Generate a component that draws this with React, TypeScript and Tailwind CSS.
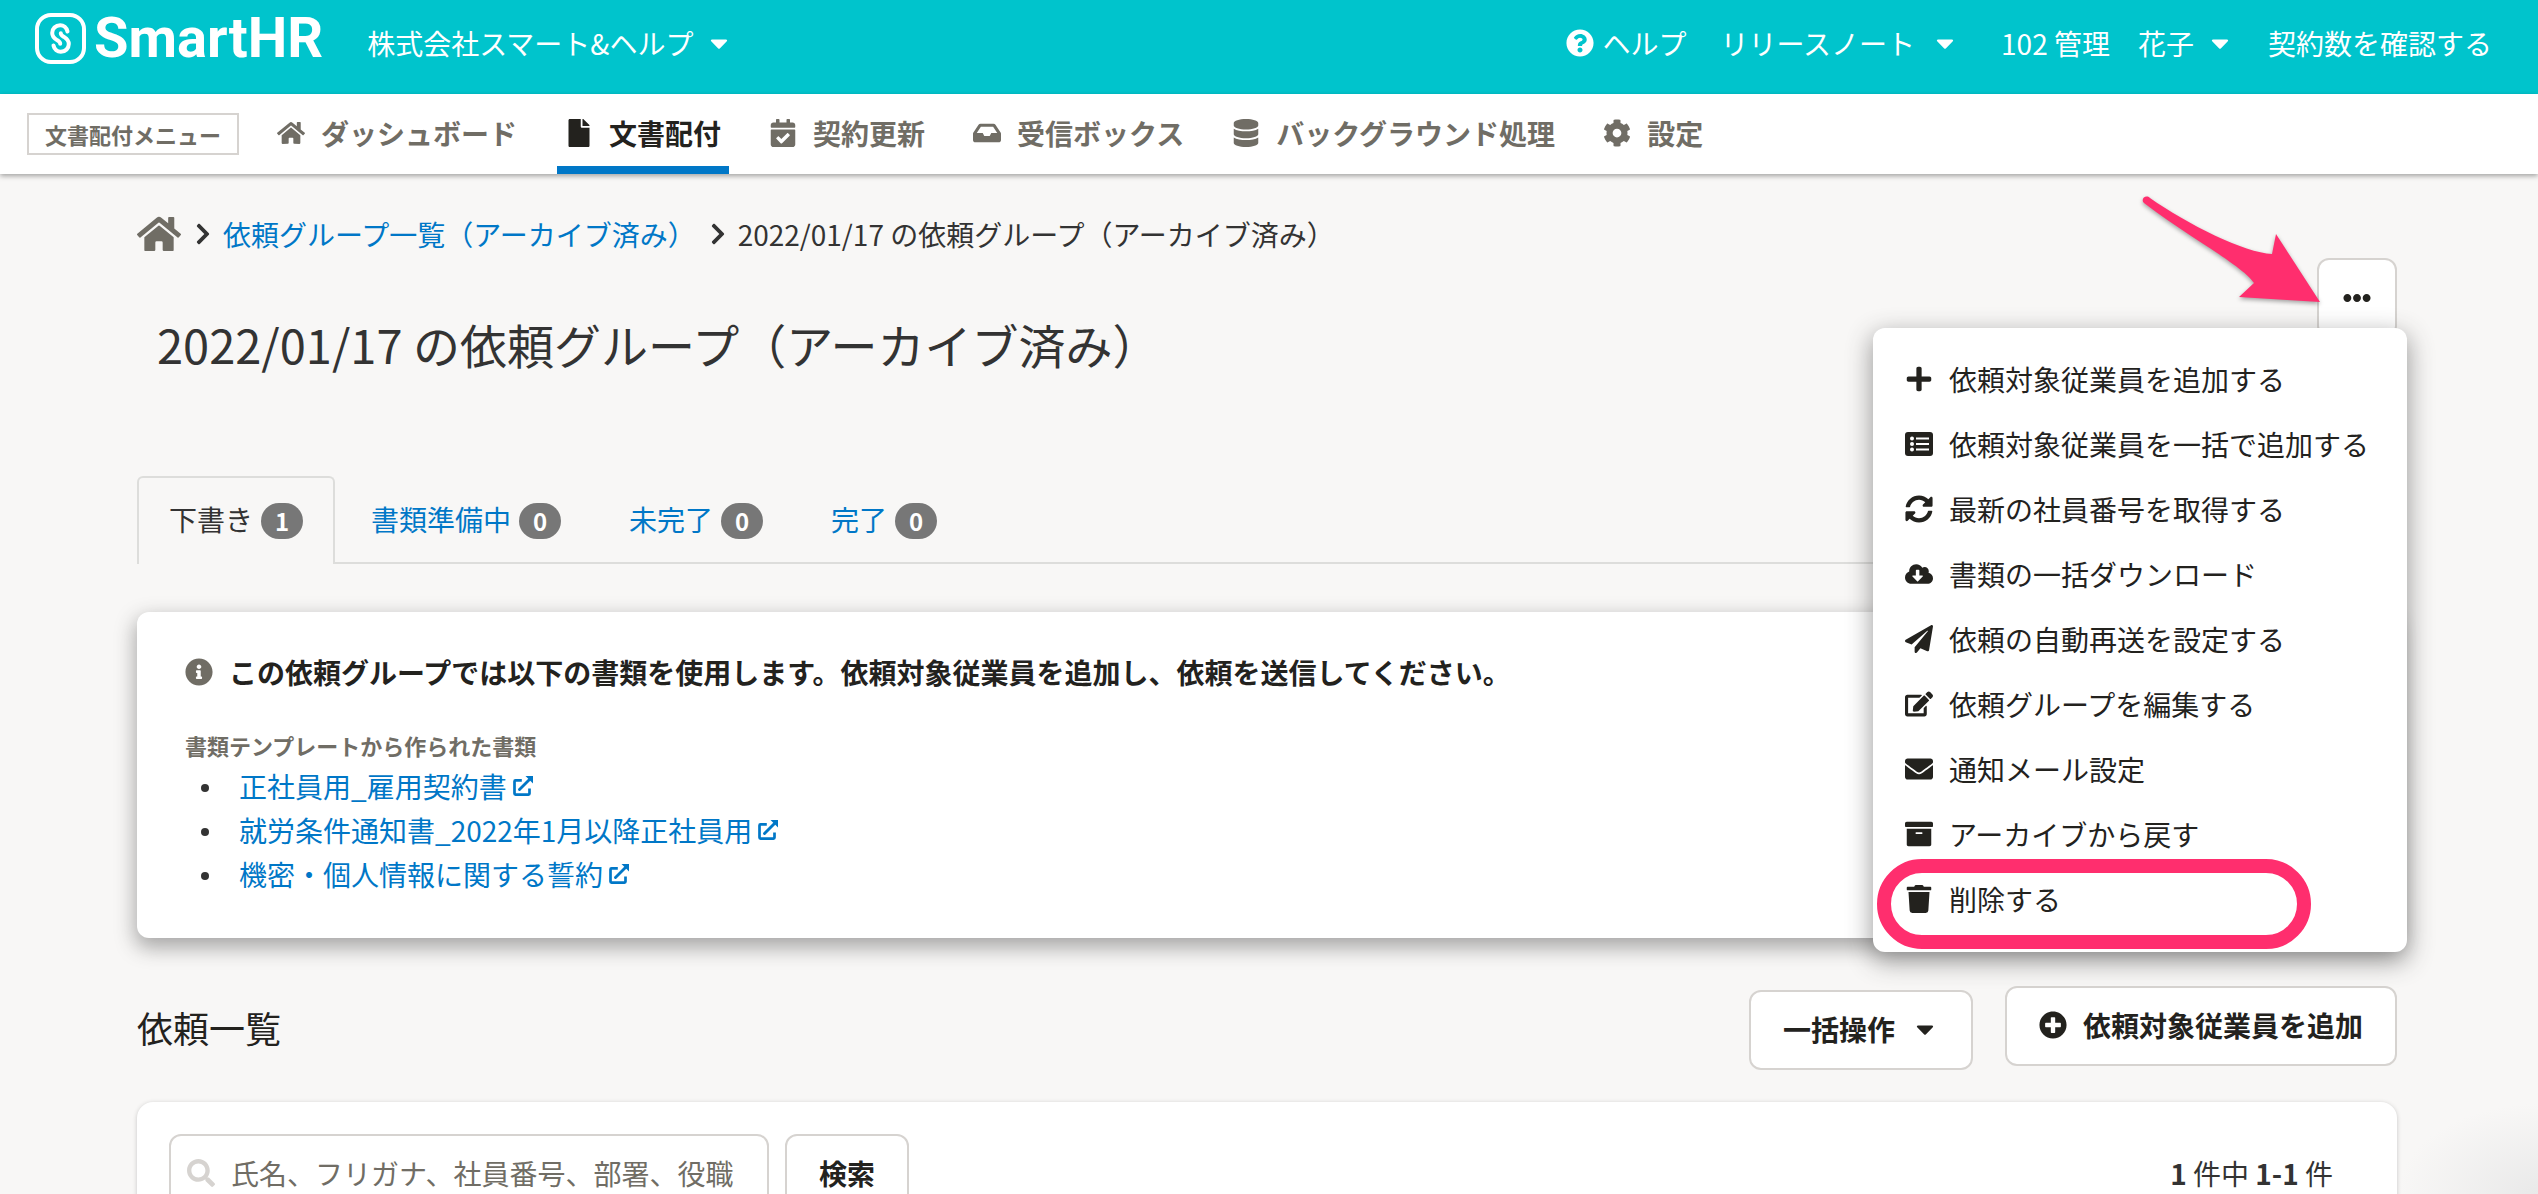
import React from 'react';
import {
  FaArchive,
  FaCalendarCheck,
  FaCaretDown,
  FaChevronRight,
  FaCloudDownloadAlt,
  FaCog,
  FaDatabase,
  FaEdit,
  FaEllipsisH,
  FaEnvelope,
  FaFile,
  FaHome,
  FaInbox,
  FaInfoCircle,
  FaPaperPlane,
  FaPlus,
  FaPlusCircle,
  FaQuestionCircle,
  FaSearch,
  FaSyncAlt,
  FaTrash,
} from 'react-icons/fa';

const navItems = [
  { label: 'ダッシュボード', icon: FaHome },
  { label: '文書配付', icon: FaFile, active: true },
  { label: '契約更新', icon: FaCalendarCheck },
  { label: '受信ボックス', icon: FaInbox },
  { label: 'バックグラウンド処理', icon: FaDatabase },
  { label: '設定', icon: FaCog },
];

const tabs = [
  { label: '下書き', count: 1, active: true },
  { label: '書類準備中', count: 0 },
  { label: '未完了', count: 0 },
  { label: '完了', count: 0 },
];

const documents = [
  '正社員用_雇用契約書',
  '就労条件通知書_2022年1月以降正社員用',
  '機密・個人情報に関する誓約',
];

const ListIcon = () => (
  <svg viewBox="0 0 28 28" className="size-7" aria-hidden="true">
    <rect y="2" width="28" height="24" rx="3" fill="currentColor" />
    <g fill="#fff">
      <circle cx="7" cy="8.5" r="2" />
      <circle cx="7" cy="14" r="2" />
      <circle cx="7" cy="19.5" r="2" />
      <rect x="11" y="7.5" width="13" height="2" />
      <rect x="11" y="13" width="13" height="2" />
      <rect x="11" y="18.5" width="13" height="2" />
    </g>
  </svg>
);

const ExternalIcon = () => (
  <svg viewBox="0 0 20 20" className="size-5" fill="none" stroke="currentColor" aria-hidden="true">
    <path d="M8.8 4.4H2.5a1 1 0 0 0-1 1v12.2a1 1 0 0 0 1 1h13a1 1 0 0 0 1-1v-5" strokeWidth="2.7" />
    <path d="m6.5 13.5 10-10" strokeWidth="2.9" strokeLinecap="round" />
    <path d="M12.5 0H20v7.5z" fill="currentColor" stroke="none" />
  </svg>
);

const menuItems = [
  { label: '依頼対象従業員を追加する', icon: FaPlus },
  { label: '依頼対象従業員を一括で追加する', icon: ListIcon },
  { label: '最新の社員番号を取得する', icon: FaSyncAlt },
  { label: '書類の一括ダウンロード', icon: FaCloudDownloadAlt },
  { label: '依頼の自動再送を設定する', icon: FaPaperPlane },
  { label: '依頼グループを編集する', icon: FaEdit },
  { label: '通知メール設定', icon: FaEnvelope },
  { label: 'アーカイブから戻す', icon: FaArchive },
  { label: '削除する', icon: FaTrash, marked: true },
];

const Header = () => (
  <header className="flex h-[94px] items-start bg-[#00c4cc] pr-[46px] pl-[35px] text-white">
    <a href="#" className="flex h-[76px] items-center gap-2">
      <svg viewBox="0 0 51 51" className="size-[51px]" fill="none" stroke="#fff" strokeWidth="4" aria-hidden="true">
        <rect x="2" y="2" width="47" height="47" rx="14" />
        <g strokeLinecap="round">
          <path d="M32.5 18.5c-.8-4-4-6.3-7.3-6.3-4.7 0-8 3.6-8 7.8 0 4.5 3.3 6 5.2 7.3 1.6 1 2.8 1.8 2.8 3.4" />
          <path d="M18.5 32.5c.8 4 4 6.3 7.3 6.3 4.7 0 8-3.6 8-7.8 0-4.5-3.3-6-5.2-7.3-1.600-1-2.800-1.800-2.800-3.400" />
        </g>
      </svg>
      <span className="font-[Roboto] text-[56px] leading-none font-bold">SmartHR</span>
    </a>
    <div className="flex h-[86px] flex-1 items-center">
      <button className="ml-11 flex items-center gap-3">
        株式会社スマート&amp;ヘルプ
        <FaCaretDown />
      </button>
      <a href="#" className="ml-auto flex items-center gap-2">
        <FaQuestionCircle />
        ヘルプ
      </a>
      <button className="mr-2 ml-[34px] flex items-center gap-4">
        リリースノート
        <FaCaretDown />
      </button>
      <button className="ml-[34px] flex items-center gap-3">
        102 管理　花子
        <FaCaretDown />
      </button>
      <a href="#" className="ml-[34px]">
        契約数を確認する
      </a>
    </div>
  </header>
);

const AppNavi = () => (
  <nav className="flex h-20 items-center gap-[30px] bg-white pl-[27px] font-bold text-[#706d65] shadow-[0_2px_5px_rgba(0,0,0,0.35)]">
    <span className="border-2 border-[#d6d3d0] px-4 text-[22px] leading-[38px]">文書配付メニュー</span>
    <div className="flex h-full gap-8">
      {navItems.map(({ label, icon: Icon, active }) => (
        <a
          key={label}
          href="#"
          className={
            active
              ? 'flex items-center gap-4 px-2 pb-[2px] text-[#23221e] shadow-[inset_0_-8px_0_#0077c7]'
              : 'flex items-center gap-4 px-2 pb-[2px]'
          }
        >
          <Icon />
          {label}
        </a>
      ))}
    </div>
  </nav>
);

const DropdownMenu = () => (
  <ul className="absolute top-[70px] -right-[10px] z-10 w-[534px] rounded-xl bg-white pt-[18px] pb-[21px] shadow-[0_8px_24px_2px_rgba(51,51,51,0.45)]">
    {menuItems.map(({ label, icon: Icon, marked }) => (
      <li key={label} className="relative">
        <button className="flex h-[65px] w-full items-center gap-4 pl-8">
          <Icon />
          {label}
        </button>
        {marked && (
          <span className="pointer-events-none absolute -top-[7px] left-1 h-[90px] w-[434px] rounded-full border-[14px] border-[#ff2e6e]" />
        )}
      </li>
    ))}
  </ul>
);

const Arrow = () => (
  <svg
    viewBox="0 0 190 120"
    className="pointer-events-none absolute -top-[68px] right-[70px] z-20 h-[120px] w-[190px] drop-shadow-[0_2px_2px_rgba(0,0,0,0.35)]"
    aria-hidden="true"
  >
    <path d="M13 8C50 34 108 63 135 64L139 44 183 112 102 107 117 93C106 76 56 50 7 13 3 9 9 4 13 8z" fill="#ff2e6e" />
  </svg>
);

const GroupPanel = () => (
  <section className="mt-12 rounded-xl bg-white px-12 pt-[38px] pb-[42px] shadow-[0_8px_20px_2px_rgba(51,51,51,0.4)]">
    <h2 className="flex items-center gap-4 leading-[44px] font-bold">
      <FaInfoCircle className="text-[#706d65]" />
      この依頼グループでは以下の書類を使用します。依頼対象従業員を追加し、依頼を送信してください。
    </h2>
    <h3 className="mt-9 text-[22px] leading-[30px] font-bold text-[#706d65]">書類テンプレートから作られた書類</h3>
    <ul className="mt-1 pl-4">
      {documents.map((name) => (
        <li key={name} className="flex items-center gap-[30px] leading-[44px]">
          <span className="mt-1 size-2 rounded-full bg-[#333]" />
          <a href="#" className="flex items-center gap-[6px] text-[#0077c7]">
            {name}
            <ExternalIcon />
          </a>
        </li>
      ))}
    </ul>
  </section>
);

const buttonClass = 'flex h-20 items-center gap-4 rounded-xl border-2 border-[#d6d3d0] bg-white px-8 pb-[2px] font-bold';

const App = () => {
  return (
    <div className="h-screen overflow-hidden bg-[#f8f7f6] bg-[radial-gradient(ellipse_140px_90px_at_100%_100%,#e9e9e9,#f8f7f6)] font-['Noto_Sans_CJK_JP',sans-serif] text-[28px] leading-[42px] text-[#23221e]">
      <Header />
      <AppNavi />
      <main className="pr-[141px] pl-[137px]">
        <nav className="flex items-center gap-2 pt-[38px] pb-[2px] text-[#333]">
          <a href="#" aria-label="ホーム" className="mr-[2px] text-[44px] text-[#706d65]">
            <FaHome />
          </a>
          <FaChevronRight className="text-2xl" />
          <a href="#" className="mr-[2px] text-[#0077c7]">
            依頼グループ一覧（アーカイブ済み）
          </a>
          <FaChevronRight className="text-2xl" />
          <span>2022/01/17 の依頼グループ（アーカイブ済み）</span>
        </nav>

        <div className="flex items-start justify-between">
          <h1 className="mt-[52px] pb-[2px] pl-5 text-[47px] leading-[68px] text-[#333]">
            2022/01/17 の依頼グループ（アーカイブ済み）
          </h1>
          <div className="relative">
            <button
              aria-label="その他の操作"
              className="flex h-20 w-20 items-center justify-center rounded-xl border-2 border-[#d6d3d0] bg-white"
            >
              <FaEllipsisH />
            </button>
            <DropdownMenu />
            <Arrow />
          </div>
        </div>

        <div className="mt-24 flex gap-1 border-b-2 border-[#dddddb]">
          {tabs.map(({ label, count, active }) => (
            <button
              key={label}
              className={
                active
                  ? '-mb-[2px] flex h-[88px] items-center gap-2 rounded-t-md border-2 border-b-0 border-[#dddddb] bg-[#f8f7f6] px-[30px] pb-1 text-[#333]'
                  : 'flex h-[86px] items-center gap-2 px-8 text-[#0077c7]'
              }
            >
              {label}
              <span className="mt-1 w-[42px] rounded-full bg-[#777] text-2xl leading-9 font-bold text-white">
                {count}
              </span>
            </button>
          ))}
        </div>

        <GroupPanel />

        <div className="mt-12 flex items-start gap-8">
          <h2 className="mr-auto text-[36px] leading-[82px]">依頼一覧</h2>
          <button className={`${buttonClass} mt-1`}>
            一括操作
            <FaCaretDown />
          </button>
          <button className={buttonClass}>
            <FaPlusCircle />
            依頼対象従業員を追加
          </button>
        </div>

        <section className="mt-8 flex h-[400px] items-start gap-4 rounded-2xl bg-white p-8 shadow-[0_1px_4px_rgba(51,51,51,0.25)]">
          <label className="flex h-20 w-[600px] items-center gap-4 rounded-xl border-2 border-[#d6d3d0] px-4 pb-[2px]">
            <FaSearch className="shrink-0 text-[#d6d3d0]" />
            <input
              type="text"
              aria-label="検索キーワード"
              placeholder="氏名、フリガナ、社員番号、部署、役職"
              className="w-full outline-none placeholder:text-[#706d65]"
            />
          </label>
          <button className={buttonClass}>検索</button>
          <p className="mr-8 ml-auto leading-[78px] text-[#333]">
            <b>1</b> 件中 <b>1-1</b> 件
          </p>
        </section>
      </main>
    </div>
  );
};

export default App;
